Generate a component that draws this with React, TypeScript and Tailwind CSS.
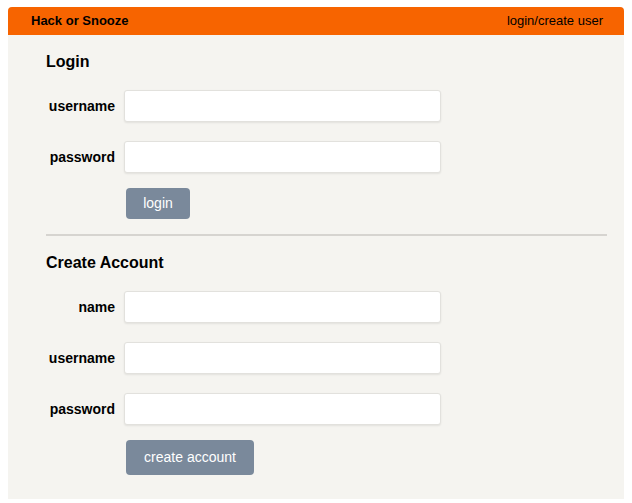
import React from "react";

function Field({ label, type = "text" }: { label: string; type?: string }) {
  return (
    <div className="flex items-center">
      <label className="w-[69px] shrink-0 text-right text-[14px] font-bold text-black">
        {label}
      </label>
      <input
        type={type}
        className="ml-[9px] h-[32px] w-[317px] rounded-[3px] border border-[#e2e1dd] bg-white px-2 shadow-[0_1px_2px_rgba(0,0,0,0.08)] outline-none"
      />
    </div>
  );
}

export default function App() {
  return (
    <div
      className="min-h-[503px] bg-white px-2 pt-[7px]"
      style={{ fontFamily: '"Liberation Sans", Arial, sans-serif' }}
    >
      <div className="h-[492px] rounded-t-[4px] bg-[#f5f4f0]">
        <nav className="flex h-[28px] items-center justify-between rounded-t-[4px] bg-[#f76400] pl-[23px] pr-[21px] text-[13px] text-black">
          <span className="font-bold">Hack or Snooze</span>
          <span>login/create user</span>
        </nav>

        <div className="pl-[38px] pr-[17px]">
          <form className="flex flex-col pt-[17px]">
            <h4 className="text-[16px] font-bold leading-[20px] text-black">Login</h4>
            <div className="mt-[18px] flex flex-col gap-[19px]">
              <Field label="username" />
              <Field label="password" type="password" />
            </div>
            <button
              type="button"
              className="ml-[80px] mt-[15px] h-[31px] w-[64px] rounded-[4px] bg-[#7a899b] text-[14px] text-white"
            >
              login
            </button>
          </form>

          <hr className="mt-[15px] h-0 border-0 border-t-[2px] border-[#d6d4d0]" />

          <form className="flex flex-col pt-[17px]">
            <h4 className="text-[16px] font-bold leading-[20px] text-black">Create Account</h4>
            <div className="mt-[18px] flex flex-col gap-[19px]">
              <Field label="name" />
              <Field label="username" />
              <Field label="password" type="password" />
            </div>
            <button
              type="button"
              className="ml-[80px] mt-[15px] h-[35px] w-[128px] rounded-[4px] bg-[#7a899b] text-[14px] text-white"
            >
              create account
            </button>
          </form>
        </div>
      </div>
    </div>
  );
}
